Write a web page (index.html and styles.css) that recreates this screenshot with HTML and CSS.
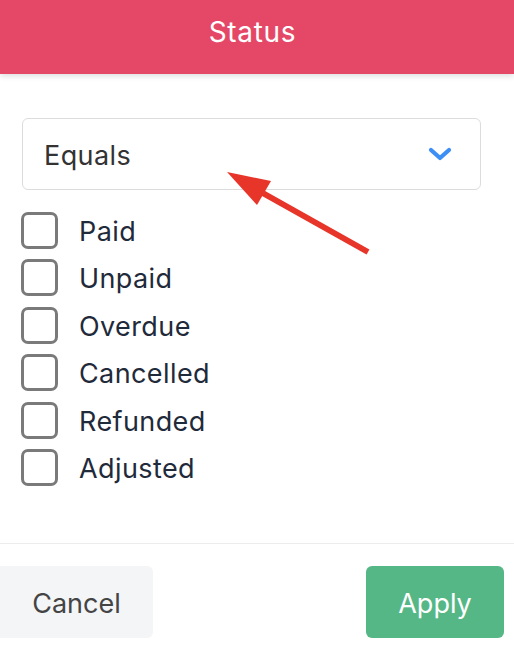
FILE: index.html
```html
<!DOCTYPE html>
<html>
<head>
<meta charset="utf-8">
<link rel="stylesheet" href="styles.css">
</head>
<body>
<div class="sheet">
  <header class="header"><h1 class="title">Status</h1></header>
  <main class="content">
    <div class="select">
      <span class="select-value">Equals</span>
      <svg class="chevron" width="24" height="14" viewBox="0 0 24 14"><path d="M3 3 L12 11 L21 3" fill="none" stroke="#3d8ef5" stroke-width="4.2" stroke-linecap="round" stroke-linejoin="round"/></svg>
    </div>
    <ul class="options">
      <li class="option"><span class="box"></span><span class="label">Paid</span></li>
      <li class="option"><span class="box"></span><span class="label">Unpaid</span></li>
      <li class="option"><span class="box"></span><span class="label">Overdue</span></li>
      <li class="option"><span class="box"></span><span class="label">Cancelled</span></li>
      <li class="option"><span class="box"></span><span class="label">Refunded</span></li>
      <li class="option"><span class="box"></span><span class="label">Adjusted</span></li>
    </ul>
  </main>
  <footer class="footer">
    <button class="btn btn-cancel">Cancel</button>
    <button class="btn btn-apply">Apply</button>
  </footer>
  <svg class="annotation" width="514" height="646" viewBox="0 0 514 646">
    <line x1="368" y1="252" x2="252" y2="187" stroke="#e8352a" stroke-width="6" stroke-linecap="butt"/>
    <polygon points="227,172 271,181 257,205" fill="#e8352a"/>
  </svg>
</div>
</body>
</html>
```
FILE: styles.css
```css
* { box-sizing: border-box; }
html, body { margin: 0; padding: 0; background: #fff; }
body { font-family: Inter, "Noto Sans", "Liberation Sans", sans-serif; }
.sheet { position: relative; width: 514px; height: 646px; overflow: hidden; }
.header {
  height: 74px;
  background: #e54867;
  display: flex;
  align-items: center;
  justify-content: center;
  box-shadow: 0 2px 6px rgba(0,0,0,0.14);
  position: relative;
  z-index: 1;
}
.title { margin: 0 9px 10px 0; font-weight: 400; font-size: 28px; color: #fff; letter-spacing: 0.7px; }
.content { padding: 44px 33px 0 22px; }
.select {
  height: 72px;
  border: 1.5px solid #dcdcdc;
  border-radius: 6px;
  display: flex;
  align-items: center;
  justify-content: space-between;
  padding: 0 28px 0 21px;
}
.select-value { font-size: 27px; letter-spacing: 0.4px; color: #333; margin-top: 2px; }
.chevron { display: block; margin-top: 0; }
.options { list-style: none; margin: 22px 0 0; padding: 0; display: flex; flex-direction: column; gap: 11.5px; }
.option { display: flex; align-items: center; height: 36px; }
.box {
  width: 37px; height: 37px;
  border: 3px solid #7a7a7a;
  border-radius: 7px;
  flex: none;
  margin-left: -1px;
}
.label { margin-left: 21px; font-size: 27px; letter-spacing: 0.4px; color: #1f2a3a; margin-top: 2px; }
.footer {
  margin-top: 57px;
  border-top: 1.5px solid #ececec;
  padding: 22px 10px 0 0;
  display: flex;
  justify-content: space-between;
}
.btn {
  height: 72px;
  border: none;
  border-radius: 6px;
  font-family: inherit;
  font-size: 27px;
  padding: 3px 0 0;
}
.btn-cancel { width: 153px; background: #f4f5f7; color: #444; border-top-left-radius: 0; border-bottom-left-radius: 0; }
.btn-apply { width: 138px; background: #55b786; color: #fff; }
.annotation { position: absolute; left: 0; top: 0; pointer-events: none; z-index: 2; }
```
